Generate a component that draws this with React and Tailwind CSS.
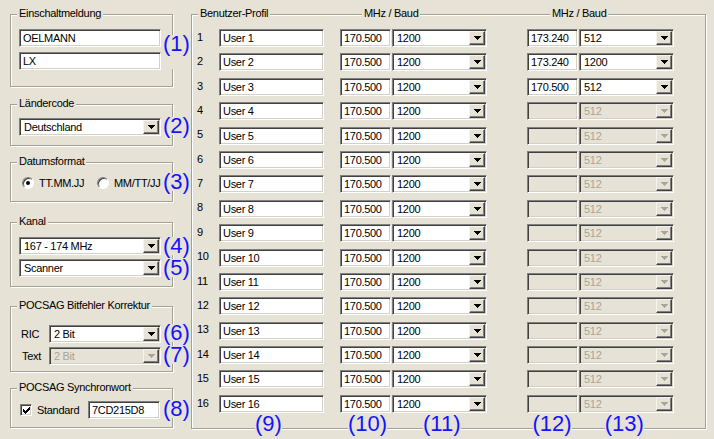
import React from "react";

const sunken =
  "border border-t-[#808080] border-l-[#808080] border-b-white border-r-white shadow-[inset_1px_1px_0_#404040,inset_-1px_-1px_0_#d4d0c8]";

function Arrow({ disabled }) {
  const c = disabled ? "#a9a598" : "#000";
  return (
    <svg width="7" height="4" viewBox="0 0 7 4" shapeRendering="crispEdges">
      <rect x="0" y="0" width="7" height="1" fill={c} />
      <rect x="1" y="1" width="5" height="1" fill={c} />
      <rect x="2" y="2" width="3" height="1" fill={c} />
      <rect x="3" y="3" width="1" height="1" fill={c} />
    </svg>
  );
}

function DropBtn({ disabled }) {
  return (
    <div className="w-[16px] h-full shrink-0 bg-[#e6e2d5] border border-t-[#f6f4ee] border-l-[#f6f4ee] border-b-[#404040] border-r-[#404040] shadow-[inset_-1px_-1px_0_#808080] flex items-center justify-center">
      <Arrow disabled={disabled} />
    </div>
  );
}

function Combo({ value, className, disabled }) {
  return (
    <div className={`h-[18px] p-[1px] flex shrink-0 ${sunken} ${disabled ? "bg-[#e6e2d5] text-[#a9a598]" : "bg-white"} ${className}`}>
      <span className="flex-1 pl-[3px] leading-[14px] whitespace-nowrap overflow-hidden">{value}</span>
      <DropBtn disabled={disabled} />
    </div>
  );
}

function Field({ value, className, disabled }) {
  return (
    <div className={`h-[18px] shrink-0 pl-[3px] leading-[16px] whitespace-nowrap ${sunken} ${disabled ? "bg-[#e6e2d5]" : "bg-white"} ${className}`}>
      {value}
    </div>
  );
}

// blue callout number, sits over group borders
function Tag({ children, className }) {
  return (
    <span className={`relative z-10 block shrink-0 h-[18px] bg-[#e6e2d5] text-[#1414ff] text-[22px] leading-[18px] tracking-normal whitespace-nowrap ${className}`}>
      {children}
    </span>
  );
}

function Group({ title, className, children }) {
  return (
    <div className={`relative shrink-0 border border-[#a3a096] shadow-[inset_1px_1px_0_#fff,1px_1px_0_#fff] ${className}`}>
      <span className="absolute left-[6px] top-[-8px] bg-[#e6e2d5] px-[2px] leading-[13px] whitespace-nowrap">{title}</span>
      {children}
    </div>
  );
}

function Radio({ checked }) {
  return (
    <div className="w-[12px] h-[12px] shrink-0 rounded-full bg-white border border-t-[#808080] border-l-[#808080] border-b-white border-r-white shadow-[inset_1px_1px_0_#404040] flex items-center justify-center">
      {checked && <div className="w-[4px] h-[4px] rounded-full bg-black" />}
    </div>
  );
}

function Check() {
  return (
    <div className={`w-[12px] h-[12px] shrink-0 bg-white ${sunken} flex items-center justify-center`}>
      <svg width="7" height="7" viewBox="0 0 7 7" shapeRendering="crispEdges">
        <path d="M0 2h1v1h1v1h1V3h1V2h1V1h1V0h1v3h-1v1h-1v1h-1v1h-1v1h-1V6H1V5H0z" fill="#000" />
      </svg>
    </div>
  );
}

const rows = Array.from({ length: 16 }, (_, i) => ({
  n: i + 1,
  f2: i < 2 ? "173.240" : i === 2 ? "170.500" : "",
  b2: i === 1 ? "1200" : "512",
  on: i < 3,
}));

export default function App() {
  return (
    <div className="w-[714px] h-[439px] overflow-hidden bg-[#e6e2d5] flex font-['Liberation_Sans',Arial,sans-serif] text-[11px] tracking-[-0.3px] text-black">
      {/* left column */}
      <div className="w-[191px] shrink-0 pl-[10px] flex flex-col">
        <Group title="Einschaltmeldung" className="w-[163px] h-[73px] mt-[14px] pt-[14px] pl-[8px]">
          <div className="flex items-start">
            <div className="flex flex-col gap-[5px]">
              <Field className="w-[142px]" value="OELMANN" />
              <Field className="w-[142px]" value="LX" />
            </div>
            <Tag className="ml-[2px] mt-[6px] h-[34px]">(1)</Tag>
          </div>
        </Group>

        <Group title="Ländercode" className="w-[163px] h-[42px] mt-[17px] pt-[13px] pl-[8px]">
          <div className="flex items-start">
            <Combo className="w-[142px]" value="Deutschland" />
            <Tag className="ml-[2px] -mt-[1px]">(2)</Tag>
          </div>
        </Group>

        <Group title="Datumsformat" className="w-[163px] h-[40px] mt-[16px] pt-[11px] pl-[11px]">
          <div className="flex items-center h-[18px]">
            <Radio checked />
            <span className="ml-[5px] w-[58px] shrink-0 whitespace-nowrap">TT.MM.JJ</span>
            <Radio />
            <span className="ml-[5px] w-[49px] shrink-0 whitespace-nowrap">MM/TT/JJ</span>
            <Tag className="-mt-[2px]">(3)</Tag>
          </div>
        </Group>

        <Group title="Kanal" className="w-[163px] h-[65px] mt-[20px] pt-[14px] pl-[8px]">
          <div className="flex flex-col gap-[4px]">
            <div className="flex items-start">
              <Combo className="w-[142px]" value="167 - 174 MHz" />
              <Tag className="ml-[2px]">(4)</Tag>
            </div>
            <div className="flex items-start">
              <Combo className="w-[142px]" value="Scanner" />
              <Tag className="ml-[2px]">(5)</Tag>
            </div>
          </div>
        </Group>

        <Group title="POCSAG Bitfehler Korrektur" className="w-[163px] h-[66px] mt-[19px] pt-[18px] pl-[10px]">
          <div className="flex flex-col gap-[4px]">
            <div className="flex items-center">
              <span className="w-[28px] shrink-0">RIC</span>
              <Combo className="w-[112px]" value="2 Bit" />
              <Tag className="ml-[2px] -mt-[2px]">(6)</Tag>
            </div>
            <div className="flex items-center">
              <span className="w-[28px] shrink-0 pl-[1px]">Text</span>
              <Combo className="w-[112px]" value="2 Bit" disabled />
              <Tag className="ml-[2px] -mt-[2px]">(7)</Tag>
            </div>
          </div>
        </Group>

        <Group title="POCSAG Synchronwort" className="w-[163px] h-[40px] mt-[16px] pt-[12px] pl-[9px]">
          <div className="flex items-center">
            <Check />
            <span className="ml-[5px] w-[51px] shrink-0">Standard</span>
            <Field className="w-[72px]" value="7CD215D8" />
            <Tag className="ml-[3px] -mt-[2px]">(8)</Tag>
          </div>
        </Group>
      </div>

      {/* right group */}
      <Group title="Benutzer-Profil" className="w-[515px] h-[415px] mt-[14px] pt-[14px] pl-[5px]">
        <span className="absolute left-[170px] top-[-8px] bg-[#e6e2d5] px-[2px] leading-[13px]">MHz / Baud</span>
        <span className="absolute left-[358px] top-[-8px] bg-[#e6e2d5] px-[2px] leading-[13px]">MHz / Baud</span>
        <div className="h-[384px] flex flex-col justify-between">
          {rows.map((r) => (
            <div key={r.n} className="flex items-center h-[18px]">
              <span className="w-[22px] shrink-0 -mt-[2px]">{r.n}</span>
              <Field className="w-[105px]" value={`User ${r.n}`} />
              <Field className="w-[51px] ml-[16px]" value="170.500" />
              <Combo className="w-[95px] ml-[1px]" value="1200" />
              <Field className="w-[51px] ml-[40px]" value={r.f2} disabled={!r.on} />
              <Combo className="w-[95px] ml-[1px]" value={r.b2} disabled={!r.on} />
            </div>
          ))}
        </div>
        <div className="flex mt-[2px]">
          <Tag className="ml-[58px]">(9)</Tag>
          <Tag className="ml-[66px]">(10)</Tag>
          <Tag className="ml-[36px]">(11)</Tag>
          <Tag className="ml-[72px]">(12)</Tag>
          <Tag className="ml-[33px]">(13)</Tag>
        </div>
      </Group>
    </div>
  );
}
